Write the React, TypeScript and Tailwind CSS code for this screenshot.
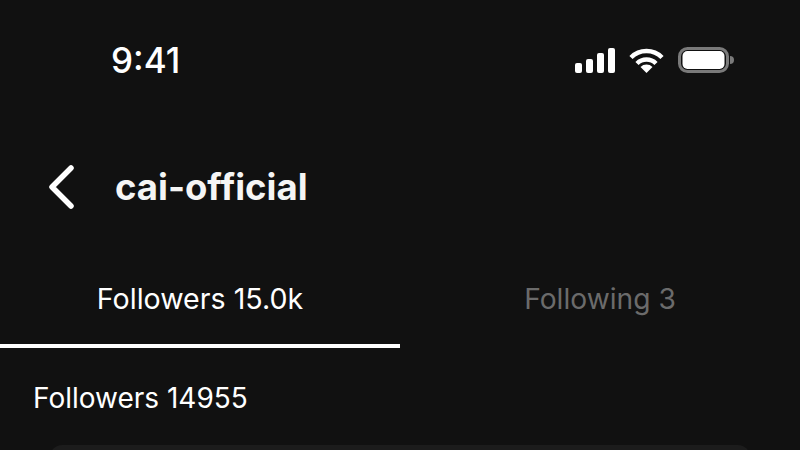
export default function App() {
  return (
    <div className="w-[800px] h-[450px] overflow-hidden bg-[#111111] text-white font-['Inter',sans-serif]">
      {/* status bar */}
      <div className="h-[120px] pl-[111px] pr-[66px] flex items-center justify-between">
        <span className="text-[35px] font-medium">9:41</span>
        <div className="flex items-center gap-[14px]">
          <svg width="40" height="25" viewBox="0 0 40 25" fill="white">
            <rect x="0" y="15" width="7" height="10" rx="2" />
            <rect x="11" y="11" width="7" height="14" rx="2" />
            <rect x="22" y="5" width="7" height="20" rx="2" />
            <rect x="33" y="0" width="7" height="25" rx="2" />
          </svg>
          <svg width="35" height="25" viewBox="0 0 35 25" fill="none" stroke="white" strokeWidth="4.5">
            <path d="M2 9.5a22 22 0 0 1 31 0" />
            <path d="M8 15.5a13.5 13.5 0 0 1 19 0" />
            <path d="M17.5 25l-6-6a8.5 8.5 0 0 1 12 0z" fill="white" stroke="none" />
          </svg>
          <svg width="56" height="26" viewBox="0 0 56 26" fill="none">
            <rect x="1.5" y="1.5" width="48" height="23" rx="8" stroke="#7a7a7a" strokeWidth="3" />
            <rect x="4.5" y="4" width="42" height="18" rx="5" fill="white" />
            <path d="M52 9a4 4 0 0 1 0 8z" fill="#7a7a7a" />
          </svg>
        </div>
      </div>
      {/* header */}
      <div className="h-[134px] flex items-center pl-[47px] gap-[38px]">
        <svg width="30" height="44" viewBox="0 0 30 44" fill="none" stroke="white" strokeWidth="5.5" strokeLinecap="round" strokeLinejoin="round">
          <path d="M24 3 L5 22 L24 41" />
        </svg>
        <h1 className="text-[36.5px] font-bold text-[#f5f5f5]">cai-official</h1>
      </div>
      {/* tabs */}
      <div className="flex">
        <div className="w-[400px] h-[94px] flex items-center justify-center text-[28.6px] border-b-4 border-white">Followers 15.0k</div>
        <div className="w-[400px] h-[94px] flex items-center justify-center text-[28.2px] pb-1 text-[#6b6b6b]">Following 3</div>
      </div>
      <div className="pl-[33px] pt-[29px] text-[28px]">Followers 14955</div>
      {/* top of the first follower card, cut off by the viewport */}
      <div className="mx-[50px] mt-[26px] h-[60px] rounded-[12px] bg-[#1c1c1c]" />
    </div>
  );
}
